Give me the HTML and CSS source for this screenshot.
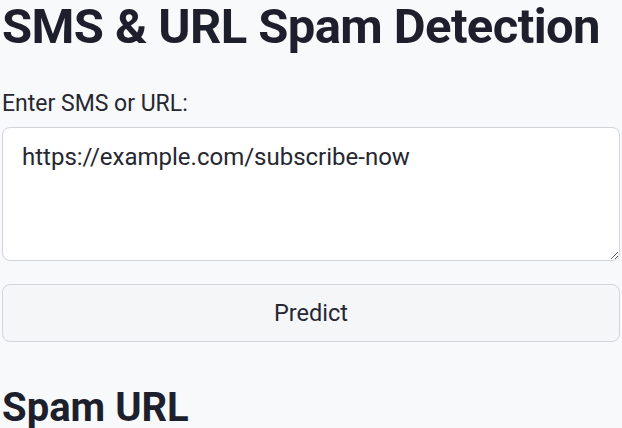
FILE: index.html
```html
<!DOCTYPE html>
<html>
<head>
<meta charset="utf-8">
<link rel="stylesheet" href="styles.css">
</head>
<body>
<main class="app">
  <h1 class="title">SMS &amp; URL Spam Detection</h1>
  <label class="label" for="msg">Enter SMS or URL:</label>
  <textarea id="msg" class="input">https://example.com/subscribe-now</textarea>
  <button class="btn">Predict</button>
  <h2 class="result">Spam URL</h2>
</main>
</body>
</html>
```
FILE: styles.css
```css
html, body {
  margin: 0;
  padding: 0;
  background: #f8f9fb;
}
body {
  font-family: Roboto, "Noto Sans", sans-serif;
  color: #262730;
}
.app {
  display: flex;
  flex-direction: column;
  padding: 0 2px;
}
.title {
  margin: 0;
  font-size: 49px;
  line-height: 54px;
  font-weight: 700;
  color: #1e1f2c;
  white-space: nowrap;
  letter-spacing: -0.6px;
}
.label {
  margin-top: 38px;
  font-size: 23px;
  line-height: 24px;
  color: #262730;
}
.input {
  margin-top: 11px;
  height: 134px;
  box-sizing: border-box;
  border: 1px solid #d3d4da;
  border-radius: 8px;
  background: #ffffff;
  padding: 13px 19px;
  font-family: Roboto, "Noto Sans", sans-serif;
  font-size: 24px;
  line-height: 32px;
  color: #262730;
  resize: vertical;
}
.btn {
  margin-top: 23px;
  height: 58px;
  border: 1px solid #d3d4da;
  border-radius: 8px;
  background: #f5f6f8;
  font-family: Roboto, "Noto Sans", sans-serif;
  font-size: 23.5px;
  color: #262730;
}
.result {
  margin: 42px 0 0;
  font-size: 40px;
  line-height: 48px;
  font-weight: 700;
  color: #1e1f2c;
  white-space: nowrap;
}
```
